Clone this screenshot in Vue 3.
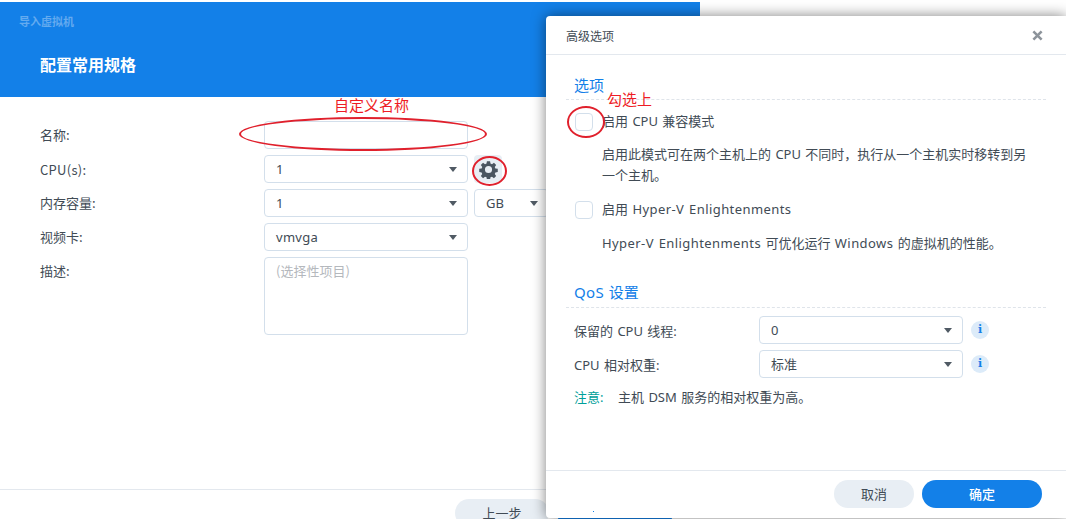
<script setup>
const appTitle = '导入虚拟机'
</script>

<template>
  <div class="page">
    <section class="wizard">
      <header class="hero">
        <div class="app-title">{{ appTitle }}</div>
        <h1 class="step-title">配置常用规格</h1>
      </header>
      <div class="form">
        <div class="row">
          <label class="lab">名称:</label>
          <div class="field"></div>
        </div>
        <div class="row">
          <label class="lab lat cpu">CPU(s):</label>
          <div class="field sel"><span>1</span><i class="caret"></i></div>
          <button class="gear">
            <svg width="19" height="19" viewBox="0 0 24 24"><path fill="#4a5560" fill-rule="evenodd" d="M10 1.500h4l.5 3 1.900.8 2.500-1.800 2.800 2.800-1.800 2.500.8 1.900 3 .5v4l-3 .5-.8 1.900 1.800 2.500-2.800 2.800-2.500-1.800-1.900.8-.5 3h-4l-.5-3-1.900-.8-2.500 1.800-2.800-2.800 1.800-2.500-.8-1.900-3-.5v-4l3-.5.8-1.900-1.800-2.500 2.800-2.800 2.500 1.800 1.900-.8zM12 7.500a4.500 4.500 0 1 0 0 9 4.500 4.500 0 0 0 0-9z"/></svg>
          </button>
        </div>
        <div class="row">
          <label class="lab">内存容量:</label>
          <div class="field sel"><span>1</span><i class="caret"></i></div>
          <div class="field sel unit"><span>GB</span><i class="caret"></i></div>
        </div>
        <div class="row">
          <label class="lab">视频卡:</label>
          <div class="field sel"><span class="lat">vmvga</span><i class="caret"></i></div>
        </div>
        <div class="row top">
          <label class="lab">描述:</label>
          <div class="field area"><span>(选择性项目)</span></div>
        </div>
      </div>
      <footer class="wiz-foot">
        <button class="btn ghost prev">上一步</button>
        <button class="btn primary next"></button>
      </footer>
    </section>

    <section class="dialog">
      <header class="dlg-head">
        <span>高级选项</span>
        <svg class="close" width="11" height="11" viewBox="0 0 12 12"><path d="M1.500 1.500l9 9M10.500 1.500l-9 9" stroke="#8d949b" stroke-width="2.800" fill="none"/></svg>
      </header>
      <div class="dlg-body">
        <h2 class="sect first">选项</h2>
        <div class="check"><i class="box"></i><span>启用 CPU 兼容模式</span></div>
        <p class="desc">启用此模式可在两个主机上的 CPU 不同时，执行从一个主机实时移转到另一个主机。</p>
        <div class="check second"><i class="box"></i><span>启用 <span class="lat wide">Hyper-V Enlightenments</span></span></div>
        <p class="desc one"><span class="lat wide">Hyper-V Enlightenments</span> 可优化运行 <span class="lat wide">Windows</span> 的虚拟机的性能。</p>
        <h2 class="sect qos"><span class="lat">QoS</span> 设置</h2>
        <div class="qrow">
          <label class="qlab">保留的 CPU 线程:</label>
          <div class="field sel"><span>0</span><i class="caret"></i></div>
          <i class="info">i</i>
        </div>
        <div class="qrow">
          <label class="qlab">CPU 相对权重:</label>
          <div class="field sel"><span>标准</span><i class="caret"></i></div>
          <i class="info">i</i>
        </div>
        <p class="note"><b>注意:</b><span>主机 DSM 服务的相对权重为高。</span></p>
      </div>
      <footer class="dlg-foot">
        <button class="btn ghost">取消</button>
        <button class="btn primary">确定</button>
      </footer>
    </section>

    <!-- red hand-drawn annotations laid over the screenshot -->
    <span class="note-red n1">自定义名称</span>
    <span class="note-red n2">勾选上</span>
    <i class="ring r1"></i>
    <i class="ring r2"></i>
    <i class="ring r3"></i>
    <i class="speck"></i>
  </div>
</template>

<style>
html, body { margin: 0; background: #fff; overflow: hidden; }
</style>

<style scoped>
.page {
  position: relative;
  width: 1066px;
  height: 519px;
  overflow: hidden;
  background: #fff;
  font-family: "Noto Sans CJK SC", "Noto Sans", sans-serif;
  font-size: 13px;
  color: #414b55;
}
.lat { letter-spacing: .3px; }
.wide { letter-spacing: .42px; }
.cpu { padding-top: 1px; }
.wizard {
  width: 700px;
  height: 517px;
  margin-top: 2px;
  display: flex;
  flex-direction: column;
}
.hero {
  height: 95px;
  flex: none;
  background: #1380e8;
  color: #fff;
  display: flex;
  flex-direction: column;
  box-sizing: border-box;
  padding: 11px 0 0 19px;
}
.app-title {
  font-size: 11px;
  line-height: 16px;
  font-weight: 700;
  color: rgba(255, 255, 255, .34);
}
.step-title {
  margin: 23px 0 0 21px;
  font-size: 16px;
  line-height: 24px;
  font-weight: 700;
}
.form {
  flex: 1;
  box-sizing: border-box;
  padding: 24px 0 0 40px;
  display: flex;
  flex-direction: column;
  gap: 6px;
}
.row { display: flex; align-items: center; height: 28px; }
.row.top { align-items: flex-start; height: 78px; }
.lab { width: 224px; flex: none; line-height: 28px; box-sizing: border-box; }
.field {
  width: 204px;
  height: 28px;
  flex: none;
  box-sizing: border-box;
  border: 1px solid #d3dfeb;
  border-radius: 4px;
  background: #fff;
  position: relative;
  padding-left: 11px;
  line-height: 26px;
  font-family: "Noto Sans", "Noto Sans CJK SC", sans-serif;
}
.sel { display: flex; align-items: center; }
.caret {
  position: absolute;
  right: 10px;
  top: 11px;
  width: 0;
  height: 0;
  border: 4.500px solid transparent;
  border-top: 5px solid #505a64;
  border-bottom: 0;
}
.unit { width: 75px; margin-left: 6px; }
.area { height: 78px; color: #b4b8bd; font-family: "Noto Sans CJK SC", sans-serif; }
.gear {
  width: 28px;
  height: 28px;
  margin-left: 6px;
  padding: 0;
  border: 0;
  border-radius: 4px;
  background: #e8eef4;
  display: flex;
  align-items: center;
  justify-content: center;
}
.wiz-foot {
  height: 30px;
  flex: none;
  border-top: 1px solid #e3e8ee;
  box-sizing: border-box;
  padding: 9px 0 0 455px;
  display: flex;
  align-items: flex-start;
  gap: 8px;
}
.btn {
  height: 28px;
  flex: none;
  border: 0;
  border-radius: 14px;
  padding: 0 0 2px;
  font: inherit;
  font-size: 13px;
  box-sizing: border-box;
}
.ghost { background: #e8eef4; color: #414b55; width: 80px; }
.primary { background: #1380e8; color: #fff; width: 120px; font-weight: 500; }
.prev { width: 94px; }
.next { width: 116px; }

.dialog {
  position: absolute;
  left: 546px;
  top: 16px;
  width: 520px;
  height: 502px;
  background: #fff;
  border-radius: 4px 0 0 4px;
  box-shadow: 0 0 14px rgba(0, 0, 0, .5);
  display: flex;
  flex-direction: column;
}
.dlg-head {
  height: 39px;
  flex: none;
  box-sizing: border-box;
  border-bottom: 1px solid #e3e8ee;
  padding: 0 23px 0 20px;
  display: flex;
  align-items: center;
  justify-content: space-between;
  font-size: 12px;
}
.dlg-body {
  flex: 1;
  padding: 0 20px;
  font-family: "Noto Sans", "Noto Sans CJK SC", sans-serif;
  word-spacing: 1px;
}
.sect {
  margin: 18px 0 0;
  padding: 0 0 3px 8px;
  font-size: 15px;
  line-height: 24px;
  font-weight: 400;
  color: #1380e8;
  border-bottom: 1px dashed #dfe4ea;
}
.first { padding-bottom: 2px; }
.check {
  display: flex;
  align-items: center;
  height: 20px;
  margin-top: 12px;
  padding-left: 9px;
}
.check > span { padding-bottom: 3px; }
.second { margin-top: 14px; }
.box {
  width: 18px;
  height: 18px;
  box-sizing: border-box;
  border: 1px solid #d3dfeb;
  border-radius: 4px;
  margin-right: 9px;
  flex: none;
}
.desc {
  margin: 12px 0 0;
  padding-left: 36px;
  width: 430px;
  line-height: 21px;
}
.one { margin-top: 13px; white-space: nowrap; }
.qos { margin-top: 26px; }
.qrow { display: flex; align-items: center; height: 28px; margin-top: 6px; padding-left: 8px; }
.sect + .qrow { margin-top: 8px; }
.qlab { width: 185px; flex: none; }
.info {
  width: 18px;
  height: 18px;
  margin-left: 8px;
  border-radius: 50%;
  background: #dcebf9;
  color: #1380e8;
  font: 700 11px/18px "DejaVu Serif", serif;
  text-align: center;
  flex: none;
}
.note { margin: 9px 0 0; padding-left: 8px; line-height: 20px; display: flex; }
.note b { font-weight: 400; color: #00a09a; width: 44px; }
.dlg-foot {
  height: 48px;
  flex: none;
  box-sizing: border-box;
  border-top: 1px solid #e3e8ee;
  padding: 9px 24px 0 0;
  display: flex;
  justify-content: flex-end;
  align-items: flex-start;
  gap: 8px;
}
.note-red {
  position: absolute;
  color: #ee1c25;
  font-size: 15px;
  line-height: 20px;
}
.n1 { left: 334px; top: 95px; }
.n2 { left: 607px; top: 89px; }
.ring {
  position: absolute;
  box-sizing: border-box;
  border: 2px solid #e0202c;
  border-radius: 50%;
}
.r1 { left: 239px; top: 117px; width: 248px; height: 34px; }
.r2 { left: 472px; top: 156px; width: 35px; height: 30px; }
.r3 { left: 567px; top: 106px; width: 38px; height: 32px; }
.speck { position: absolute; left: 593px; top: 511px; width: 1px; height: 1px; background: #1380e8; }
</style>
